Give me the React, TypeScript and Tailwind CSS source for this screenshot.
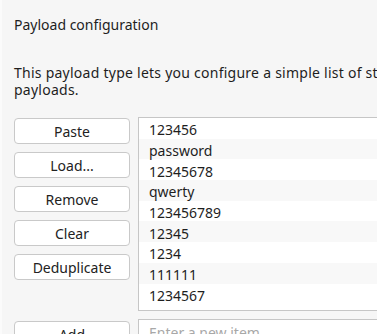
const items = ['123456', 'password', '12345678', 'qwerty', '123456789', '12345', '1234', '111111', '1234567'];
const buttons = ['Paste', 'Load...', 'Remove', 'Clear', 'Deduplicate'];

function Btn({ label }: { label: string }) {
  return (
    <button type="button" className="flex h-[26px] w-[116px] items-center justify-center rounded-[4px] border border-[#c9c9c9] bg-white text-[14px] text-[#222]">
      {label}
    </button>
  );
}

export default function App() {
  return (
    <div className="h-[334px] w-[377px] overflow-hidden border-l-2 border-[#fbfbfb] bg-[#f6f6f6] pl-[12px] text-[#1e1e1e]" style={{ fontFamily: '"Noto Sans", "Open Sans", sans-serif' }}>
      <h2 className="pt-[16px] text-[14px] leading-[17px]">Payload configuration</h2>
      <p className="mt-[31px] w-[420px] whitespace-nowrap text-[14px] leading-[17px] tracking-[0.25px]">
        This payload type lets you configure a simple list of strings that are used as
        <br />
        payloads.
      </p>
      <div className="mt-[19px] flex gap-[8px]">
        <div className="flex flex-col gap-[8px] pt-[1px]">
          {buttons.map((b) => (
            <Btn key={b} label={b} />
          ))}
        </div>
        <div className="h-[194px] w-[260px] shrink-0 border border-[#c6c6c6] bg-white pb-[6px]">
          {items.map((it, i) => (
            <div key={it} className={`flex h-[20.7px] items-center pl-[10px] pt-[3px] text-[14px] ${i % 2 ? 'bg-[#f8f8f8]' : 'bg-white'}`}>
              {it}
            </div>
          ))}
        </div>
      </div>
      <div className="mt-[8px] flex gap-[8px]">
        <div className="pt-[2px]">
          <Btn label="Add" />
        </div>
        <input className="h-[26px] w-[260px] shrink-0 border border-[#c6c6c6] bg-white pl-[10px] text-[14px] placeholder:text-[#a8a8a8] outline-none" placeholder="Enter a new item" />
      </div>
    </div>
  );
}
